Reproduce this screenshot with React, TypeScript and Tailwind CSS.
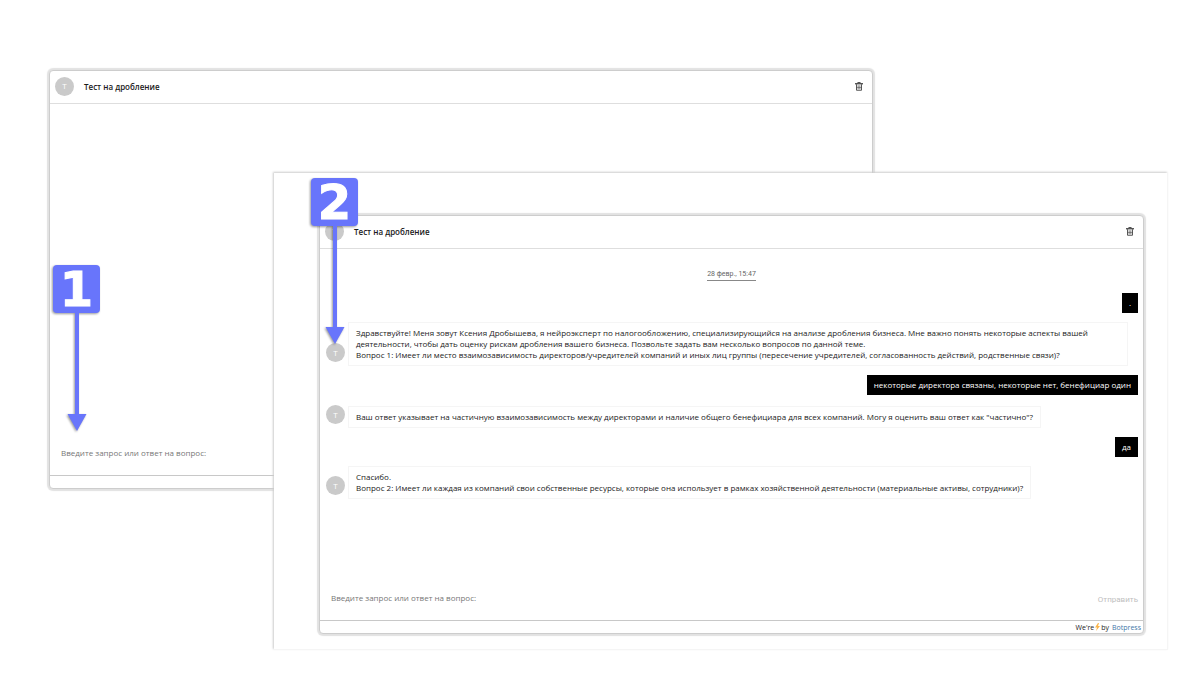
import * as React from "react";

type Message = {
	from: "bot" | "user";
	lines: string[];
};

const messages: Message[] = [
	{ from: "user", lines: ["."] },
	{
		from: "bot",
		lines: [
			"Здравствуйте! Меня зовут Ксения Дробышева, я нейроэксперт по налогообложению, специализирующийся на анализе дробления бизнеса. Мне важно понять некоторые аспекты вашей деятельности, чтобы дать оценку рискам дробления вашего бизнеса. Позвольте задать вам несколько вопросов по данной теме.",
			"Вопрос 1: Имеет ли место взаимозависимость директоров/учредителей компаний и иных лиц группы (пересечение учредителей, согласованность действий, родственные связи)?",
		],
	},
	{ from: "user", lines: ["некоторые директора связаны, некоторые нет, бенефициар один"] },
	{
		from: "bot",
		lines: [
			'Ваш ответ указывает на частичную взаимозависимость между директорами и наличие общего бенефициара для всех компаний. Могу я оценить ваш ответ как "частично"?',
		],
	},
	{ from: "user", lines: ["да"] },
	{
		from: "bot",
		lines: [
			"Спасибо.",
			"Вопрос 2: Имеет ли каждая из компаний свои собственные ресурсы, которые она использует в рамках хозяйственной деятельности (материальные активы, сотрудники)?",
		],
	},
];

const TrashIcon = () => (
	<svg viewBox="0 0 16 18" className="w-2 h-[9px]" fill="none" stroke="#444" aria-hidden="true">
		<path d="M0 3.5h16" strokeWidth="2.6" />
		<path d="M5.5 3V1h5v2" strokeWidth="1.8" />
		<path d="M3 4.5v12h10v-12" strokeWidth="1.8" />
		<path d="M6.3 6.5v8M9.7 6.5v8" strokeWidth="1.4" />
		<path d="M3 11h10" strokeWidth="1" />
	</svg>
);

const BoltIcon = () => (
	<svg viewBox="0 0 10 16" className="w-[5px] h-2" aria-hidden="true">
		<path d="M6 0L0 9h4L2 16l8-10H6l2-6z" fill="#fbb54a" />
	</svg>
);

const Avatar = () => (
	<div className="flex items-center justify-center shrink-0 w-[19px] h-[19px] rounded-full bg-[#cacaca] text-white text-[8px] leading-none">
		T
	</div>
);

const Bubble = ({ message }: { message: Message }) => {
	if (message.from === "user") {
		return (
			<div className="self-end mr-[5px] px-[7px] pt-1 pb-[5px] bg-black text-white">
				{message.lines.map((line) => (
					<p key={line}>{line}</p>
				))}
			</div>
		);
	}
	return (
		<div className="flex items-end gap-[3px] min-h-6 pl-[6px] pr-[15px]">
			<div className="mb-1">
				<Avatar />
			</div>
			<div className="border border-[#f5f5f5] px-[7px] pt-1 pb-[5px] text-[#222]">
				{message.lines.map((line) => (
					<p key={line}>{line}</p>
				))}
			</div>
		</div>
	);
};

type ChatWindowProps = {
	active?: boolean;
	children?: React.ReactNode;
};

const ChatWindow = ({ active, children }: ChatWindowProps) => {
	return (
		<section className="flex flex-col bg-white border border-[#cdcdcd] rounded-[4px] shadow-[0_0_1px_2px_#e2e2e2]">
			<header className="flex items-center h-[33px] pl-[5px] pr-[9px] pb-[2px] border-b border-[#dedede]">
				<Avatar />
				<h2 className="ml-[10px] pt-[2px] text-[8px] font-semibold text-[#1a1a1a]">
					Тест на дробление
				</h2>
				<button type="button" aria-label="Удалить" className="ml-auto">
					<TrashIcon />
				</button>
			</header>
			<div className="flex flex-col gap-[9px] min-h-[328px] pt-5 text-[8px] leading-[11px]">
				{children}
			</div>
			<form className="flex items-center h-11 pl-[11px] pr-[5px] border-b border-[#c8c8c8]">
				<input
					type="text"
					aria-label="Сообщение"
					placeholder="Введите запрос или ответ на вопрос:"
					className="w-60 h-5 mb-[2px] text-[8px] leading-5 outline-none placeholder:text-[#777]"
				/>
				{active && (
					<button type="button" className="ml-auto pt-[2px] font-[Roboto] text-[8px] text-[#c0c0c0]">
						Отправить
					</button>
				)}
			</form>
			<footer className="flex items-center justify-end gap-[1px] h-3 pr-[2px] text-[7px] leading-none text-[#222]">
				{active && (
					<>
						We're
						<BoltIcon />
						<span className="mr-[2px]">by</span>
						<a href="#" className="text-[#3f77a8]">
							Botpress
						</a>
					</>
				)}
			</footer>
		</section>
	);
};

// numbered marker with an arrow going down from it
const Step = ({ value }: { value: number }) => (
	<div className="flex flex-col items-center w-[47px] drop-shadow-[-1px_1px_1px_#0006]">
		<div className="flex items-center justify-center w-full h-12 rounded-[4px] bg-[#6875fb] font-['DejaVu_Sans'] text-[48px] leading-none font-bold text-white [-webkit-text-stroke:1px_white]">
			{value}
		</div>
		<svg viewBox="0 0 20 118" className="w-5 h-[118px]" aria-hidden="true">
			<path d="M8 0h4v101h7.500L10 118 .5 101H8z" fill="#6875fb" />
		</svg>
	</div>
);

const App = () => {
	return (
		<main className="relative grid items-start min-h-screen bg-white pl-[49px] pr-[31px] pt-[70px] font-['Open_Sans',sans-serif]">
			<div className="col-start-1 row-start-1 mr-[295px]">
				<ChatWindow />
			</div>
			<div className="absolute left-[53px] top-[265px]">
				<Step value={1} />
			</div>
			<div className="relative col-start-1 row-start-1 ml-[225px] mt-[103px] pt-[42px] pl-[45px] pr-[23px] pb-[15px] bg-white border-r border-b border-[#f5f5f5] shadow-[-1px_-1px_2px_#ccc]">
				<ChatWindow active>
					<time className="self-center mb-[3px] border-b border-[#888] font-[Roboto] text-[7px] leading-[11px] text-[#666]">
						28 февр., 15:47
					</time>
					{messages.map((message) => (
						<Bubble key={message.lines[0]} message={message} />
					))}
				</ChatWindow>
				<div className="absolute left-[37px] top-[5px]">
					<Step value={2} />
				</div>
			</div>
		</main>
	);
};

export default App;
